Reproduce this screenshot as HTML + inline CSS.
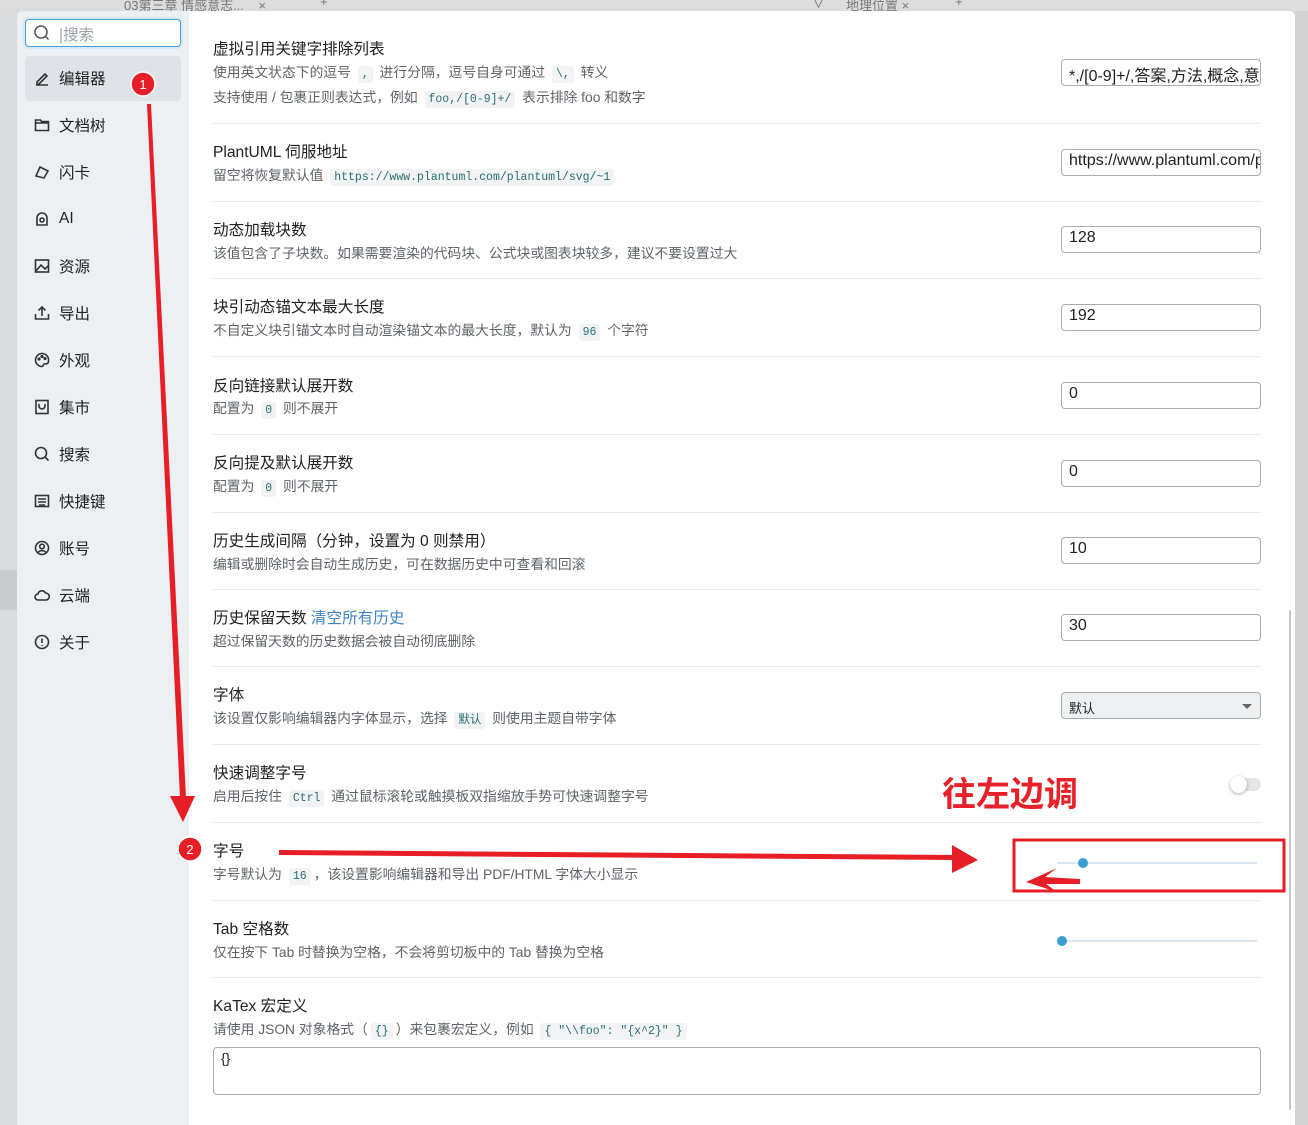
<!DOCTYPE html>
<html><head><meta charset="utf-8"><style>
*{box-sizing:border-box;margin:0;padding:0}
body{width:1308px;height:1125px;overflow:hidden;background:#d9dbdd;font-family:"Liberation Sans","Noto Sans CJK SC",sans-serif;position:relative}
.abs{position:absolute}
.tabs{left:0;top:0;width:1308px;height:11px;background:#dcdcdc;font-size:13px;color:#777;overflow:hidden}
.dlg{left:17px;top:11px;width:1278px;height:1114px;background:#fff;border-radius:6px 6px 0 0;overflow:hidden}
.side{left:17px;top:11px;width:172px;height:1114px;background:#edf0f3;border-radius:6px 0 0 0}
.si{position:absolute;left:34px;font-size:15.5px;color:#202124;display:flex;align-items:center;gap:9px;height:20px}
.si svg{width:16px;height:16px;fill:none;stroke:#333;stroke-width:1.6}
.t{position:absolute;left:213px;font-size:15.6px;color:#202124;white-space:nowrap;margin-top:-1px}
.d{position:absolute;left:213px;font-size:13.8px;color:#5f6368;white-space:nowrap;margin-top:-1px}
code{font-family:"Liberation Mono",monospace;font-size:11.5px;background:#f1f3f4;color:#2a6e73;padding:2px 4px;border-radius:3px;margin:0 3px}
.sep{position:absolute;left:213px;width:1048px;height:1px;background:#e8e8e8}
.in{position:absolute;left:1061px;width:200px;height:27px;border:1px solid #a9acaf;border-radius:4px;font-size:16px;color:#202124;padding:2px 7px;white-space:nowrap;overflow:hidden}
</style></head><body>
<div class="abs tabs"><span class="abs" style="left:124px;top:-5px">03第三章 情感意志...&nbsp;&nbsp;&nbsp; ×</span><span class="abs" style="left:320px;top:-6px">+</span><span class="abs" style="left:812px;top:-7px">∨</span><span class="abs" style="left:846px;top:-5px">地理位置 ×</span><span class="abs" style="left:955px;top:-6px">+</span></div>
<div class="abs dlg"></div>
<div class="abs side"></div>
<div class="abs" style="left:1295px;top:11px;width:13px;height:1114px;background:#d3d3d3"></div>
<div class="abs" style="left:1289px;top:610px;width:2px;height:500px;background:#c8c8c8"></div>
<div class="abs" style="left:0;top:570px;width:17px;height:40px;background:#c9cbcd"></div>
<div class="abs" style="left:25px;top:19px;width:156px;height:28px;border:1px solid #4a9fd5;border-radius:4px;background:#fff;box-shadow:0 0 0 2px #d6e8f5"></div>
<svg class="abs" style="left:33px;top:24px" width="18" height="18" viewBox="0 0 18 18" fill="none" stroke="#555" stroke-width="1.5"><circle cx="8" cy="8" r="6"/><path d="M12.5 12.5l3 3"/></svg>
<div class="abs" style="left:59px;top:23px;font-size:15.5px;color:#9aa0a6">|搜索</div>
<div class="abs" style="left:25px;top:56px;width:156px;height:45px;background:#dfe3e7;border-radius:4px"></div>
<div class="si" style="top:68px"><svg viewBox="0 0 16 16"><path d="M3 12l8-8 2 2-8 8H3z M2 15h12"/></svg>编辑器</div>
<div class="si" style="top:115px"><svg viewBox="0 0 16 16"><path d="M1.5 3h5l1 1.5h7v9h-13z M1.5 6h13"/></svg>文档树</div>
<div class="si" style="top:162px"><svg viewBox="0 0 16 16"><path d="M2 12l4-9 8 4-4 7z"/></svg>闪卡</div>
<div class="si" style="top:209px"><svg viewBox="0 0 16 16"><path d="M3 14V7a5 5 0 0110 0v7z"/><circle cx="8" cy="9" r="2"/></svg>AI</div>
<div class="si" style="top:256px"><svg viewBox="0 0 16 16"><rect x="1.5" y="2" width="13" height="12"/><path d="M2 13l5-6 4 4 3-3"/></svg>资源</div>
<div class="si" style="top:303px"><svg viewBox="0 0 16 16"><path d="M1.5 9v5h13V9 M8 11V2 M4.5 5.5L8 2l3.5 3.5"/></svg>导出</div>
<div class="si" style="top:350px"><svg viewBox="0 0 16 16"><path d="M8 1.5a6.5 6.5 0 100 13c1.5 0 1-2 2-2.5s4.5 1 4.5-3A6.5 6.5 0 008 1.5z"/><circle cx="5" cy="7" r=".8"/><circle cx="8" cy="4.5" r=".8"/><circle cx="11" cy="6.5" r=".8"/></svg>外观</div>
<div class="si" style="top:397px"><svg viewBox="0 0 16 16"><rect x="2" y="1.5" width="12" height="13"/><path d="M5 5v2a3 3 0 006 0V5"/></svg>集市</div>
<div class="si" style="top:444px"><svg viewBox="0 0 16 16"><circle cx="7" cy="7" r="5.5"/><path d="M11 11l3.5 3.5"/></svg>搜索</div>
<div class="si" style="top:491px"><svg viewBox="0 0 16 16"><rect x="1.5" y="2.5" width="13" height="11"/><path d="M4 6h8M4 9h8M5 12h6"/></svg>快捷键</div>
<div class="si" style="top:538px"><svg viewBox="0 0 16 16"><circle cx="8" cy="8" r="6.5"/><circle cx="8" cy="6.5" r="2.3"/><path d="M4 12.5c2-2.5 6-2.5 8 0"/></svg>账号</div>
<div class="si" style="top:585px"><svg viewBox="0 0 16 16"><path d="M4 13a3 3 0 010-6 4 4 0 017.5-1A3.5 3.5 0 0112 13z"/></svg>云端</div>
<div class="si" style="top:632px"><svg viewBox="0 0 16 16"><circle cx="8" cy="8" r="6.5"/><path d="M8 4.5v4.5M8 11v1"/></svg>关于</div>

<div class="t" style="top:38px">虚拟引用关键字排除列表</div>
<div class="d" style="top:62px">使用英文状态下的逗号 <code>,</code> 进行分隔，逗号自身可通过 <code>\,</code> 转义</div>
<div class="d" style="top:87px">支持使用 / 包裹正则表达式，例如 <code>foo,/[0-9]+/</code> 表示排除 foo 和数字</div>
<div class="in" style="top:59px">*,/[0-9]+/,答案,方法,概念,意义</div>
<div class="sep" style="top:123px"></div>

<div class="t" style="top:141px">PlantUML 伺服地址</div>
<div class="d" style="top:165px">留空将恢复默认值 <code>https://www.plantuml.com/plantuml/svg/~1</code></div>
<div class="in" style="top:149px">https://www.plantuml.com/plantuml</div>
<div class="sep" style="top:201px"></div>

<div class="t" style="top:219px">动态加载块数</div>
<div class="d" style="top:243px">该值包含了子块数。如果需要渲染的代码块、公式块或图表块较多，建议不要设置过大</div>
<div class="in" style="top:226px">128</div>
<div class="sep" style="top:278px"></div>

<div class="t" style="top:296px">块引动态锚文本最大长度</div>
<div class="d" style="top:320px">不自定义块引锚文本时自动渲染锚文本的最大长度，默认为 <code>96</code> 个字符</div>
<div class="in" style="top:304px">192</div>
<div class="sep" style="top:356px"></div>

<div class="t" style="top:375px">反向链接默认展开数</div>
<div class="d" style="top:398px">配置为 <code>0</code> 则不展开</div>
<div class="in" style="top:382px">0</div>
<div class="sep" style="top:434px"></div>

<div class="t" style="top:452px">反向提及默认展开数</div>
<div class="d" style="top:476px">配置为 <code>0</code> 则不展开</div>
<div class="in" style="top:460px">0</div>
<div class="sep" style="top:512px"></div>

<div class="t" style="top:530px">历史生成间隔（分钟，设置为 0 则禁用）</div>
<div class="d" style="top:554px">编辑或删除时会自动生成历史，可在数据历史中可查看和回滚</div>
<div class="in" style="top:537px">10</div>
<div class="sep" style="top:589px"></div>

<div class="t" style="top:607px">历史保留天数 <span style="color:#4285c4">清空所有历史</span></div>
<div class="d" style="top:631px">超过保留天数的历史数据会被自动彻底删除</div>
<div class="in" style="top:614px">30</div>
<div class="sep" style="top:666px"></div>

<div class="t" style="top:684px">字体</div>
<div class="d" style="top:708px">该设置仅影响编辑器内字体显示，选择 <code>默认</code> 则使用主题自带字体</div>
<div class="in" style="top:692px;background:#eef0f2;font-size:13px;padding-top:5px">默认<span class="abs" style="right:8px;top:11px;border:5px solid transparent;border-top-color:#666;border-bottom:0"></span></div>
<div class="sep" style="top:744px"></div>

<div class="t" style="top:762px">快速调整字号</div>
<div class="d" style="top:786px">启用后按住 <code>Ctrl</code> 通过鼠标滚轮或触摸板双指缩放手势可快速调整字号</div>
<div class="abs" style="left:1230px;top:778px;width:31px;height:13px;border-radius:7px;background:#e3e5e8"></div>
<div class="abs" style="left:1230px;top:776px;width:17px;height:17px;border-radius:50%;background:#fff;box-shadow:0 1px 3px rgba(0,0,0,.35)"></div>
<div class="abs" style="left:942px;top:770px;font-size:34px;font-weight:bold;color:#e8202a;text-shadow:0 0 2px #fff,0 0 3px #fff;font-family:'Noto Sans CJK SC',sans-serif;line-height:44px">往左边调</div>
<div class="sep" style="top:822px"></div>

<div class="t" style="top:840px">字号</div>
<div class="d" style="top:864px">字号默认为 <code>16</code>，该设置影响编辑器和导出 PDF/HTML 字体大小显示</div>
<div class="abs" style="left:1057px;top:862px;width:200px;height:2px;background:#d9e6ee"></div>
<div class="abs" style="left:1078px;top:858px;width:10px;height:10px;border-radius:50%;background:#3a9fd0"></div>
<div class="sep" style="top:900px"></div>

<div class="t" style="top:918px">Tab 空格数</div>
<div class="d" style="top:942px">仅在按下 Tab 时替换为空格，不会将剪切板中的 Tab 替换为空格</div>
<div class="abs" style="left:1057px;top:940px;width:200px;height:2px;background:#d9e6ee"></div>
<div class="abs" style="left:1057px;top:936px;width:10px;height:10px;border-radius:50%;background:#3a9fd0"></div>
<div class="sep" style="top:977px"></div>

<div class="t" style="top:995px">KaTex 宏定义</div>
<div class="d" style="top:1019px">请使用 JSON 对象格式（<code>{}</code>）来包裹宏定义，例如 <code>{ "\\foo": "{x^2}" }</code></div>
<div class="in" style="top:1047px;left:213px;width:1048px;height:48px;font-size:14px">{}</div>

<svg class="abs" style="left:0;top:0" width="1308" height="1125">
<g fill="#e81e26" stroke="none">
<path d="M147 104 L151 104 L186 798 L180 798 Z"/>
<path d="M170 796 L195 796 L183 822 Z"/>
<path d="M279 850 L955 855 L955 860 L279 855 Z"/>
<path d="M952 845 L978 860 L952 873 Z"/>
<path d="M1080 879 L1045 877 L1057 868 L1026 882 L1057 892 L1046 884 L1080 884 Z"/>
</g>
<rect x="1014" y="840" width="270" height="51" fill="none" stroke="#e81e26" stroke-width="3"/>
<circle cx="143" cy="84" r="12" fill="#e81e26" stroke="#fff" stroke-width="1.5"/>
<text x="143" y="89" font-size="13" fill="#fff" text-anchor="middle" font-family="Liberation Sans">1</text>
<circle cx="190" cy="849" r="12" fill="#e81e26" stroke="#fff" stroke-width="1.5"/>
<text x="190" y="854" font-size="13" fill="#fff" text-anchor="middle" font-family="Liberation Sans">2</text>
</svg>
</body></html>
